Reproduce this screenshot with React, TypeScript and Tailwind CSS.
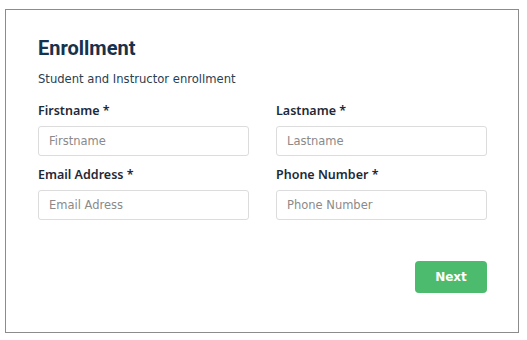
import type { ReactNode } from 'react';

const font = { fontFamily: '"DejaVu Sans", Verdana, sans-serif' };

function Field({ label, placeholder }: { label: string; placeholder: string }) {
  return (
    <div className="flex flex-col">
      <label
        className="text-[12.5px] font-semibold text-[#1e2a36] leading-[16px]"
        style={{ fontFamily: '"Noto Sans", "Open Sans", sans-serif' }}
      >
        {label} *
      </label>
      <input
        placeholder={placeholder}
        className="mt-[7px] h-[30px] w-full rounded-[3px] border border-[#dcdcdc] px-[10px] text-[11.5px] text-[#333] placeholder:text-[#8a8a8a] outline-none"
        style={font}
      />
    </div>
  );
}

function Row({ children }: { children: ReactNode }) {
  return <div className="grid grid-cols-2 gap-x-[27px]">{children}</div>;
}

export default function App() {
  return (
    <div className="bg-white w-[527px] h-[340px] pt-[9px] pl-[5px]" style={font}>
      <div className="w-[514px] h-[324px] border border-[#8c8c8c] bg-white pl-[32px] pr-[31px] pt-[26px]">
        <h1
          className="text-[20px] font-bold text-[#17324e] leading-[24px]"
          style={{ fontFamily: 'Roboto, "Open Sans", sans-serif' }}
        >
          Enrollment
        </h1>
        <p className="mt-[11px] text-[11.6px] text-[#2a4052] leading-[16px]">Student and Instructor enrollment</p>
        <div className="mt-[16px] flex flex-col gap-[11px]">
          <Row>
            <Field label="Firstname" placeholder="Firstname" />
            <Field label="Lastname" placeholder="Lastname" />
          </Row>
          <Row>
            <Field label="Email Address" placeholder="Email Adress" />
            <Field label="Phone Number" placeholder="Phone Number" />
          </Row>
        </div>
        <div className="mt-[41px] flex justify-end">
          <button className="h-[32px] w-[72px] rounded-[4px] bg-[#4dbb6d] text-[12px] font-bold text-white">
            Next
          </button>
        </div>
      </div>
    </div>
  );
}
